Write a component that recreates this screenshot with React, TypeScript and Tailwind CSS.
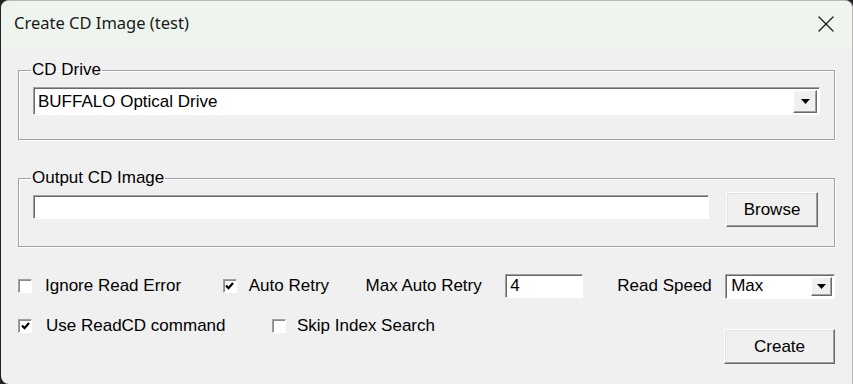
import { X } from "lucide-react"

const ui = "font-['Liberation_Sans',Arial,sans-serif] text-[17px] text-black"

function Check({ checked }: { checked?: boolean }) {
  return (
    <span className="w-[14px] h-[14px] bg-white border-t border-l border-t-[#a0a0a0] border-l-[#a0a0a0] border-b border-r border-b-white border-r-white shadow-[inset_1px_1px_0_#8a8a8a] flex items-center justify-center">
      {checked && (
        <svg width="9" height="8" viewBox="0 0 9 8">
          <path d="M1 3.5 L3.5 6.2 L8 1" stroke="#000" strokeWidth="2.2" fill="none" />
        </svg>
      )}
    </span>
  )
}

function Sunken({ className, children }: { className?: string; children?: React.ReactNode }) {
  return (
    <div className={`bg-white border border-t-[#a0a0a0] border-l-[#a0a0a0] border-b-white border-r-white shadow-[inset_1px_1px_0_#696969] flex items-center ${className ?? ""}`}>
      {children}
    </div>
  )
}

function DropArrow({ className }: { className?: string }) {
  return (
    <div className={`bg-[#f0f0f0] border border-t-white border-l-white border-b-[#696969] border-r-[#696969] shadow-[inset_-1px_-1px_0_#a0a0a0] flex items-center justify-center ${className ?? ""}`}>
      <svg width="9" height="5" viewBox="0 0 9 5">
        <path d="M0 0 H9 L4.5 5 Z" fill="#000" />
      </svg>
    </div>
  )
}

function Button({ label, className }: { label: string; className?: string }) {
  return (
    <div className={`bg-[#f0f0f0] border border-t-white border-l-white border-b-[#696969] border-r-[#696969] shadow-[inset_-1px_-1px_0_#a0a0a0,inset_1px_1px_0_#e3e3e3] flex items-center justify-center ${className ?? ""}`}>
      {label}
    </div>
  )
}

function Group({ title, className, children }: { title: string; className?: string; children: React.ReactNode }) {
  return (
    <fieldset className={`border border-[#a0a0a0] shadow-[1px_1px_0_white,inset_1px_1px_0_white] px-[14px] ${className ?? ""}`}>
      <legend className="ml-[-2px] px-[1px] leading-[16px]">{title}</legend>
      {children}
    </fieldset>
  )
}

export default function App() {
  return (
    <div className="w-[853px] h-[384px] bg-[#232323] overflow-hidden">
      <div className={`w-[852px] h-[384px] ml-[1px] bg-[#f0f0f0] rounded-t-[8px] rounded-bl-[8px] border-r border-t border-[#b9b9b9] overflow-hidden flex flex-col ${ui}`}>
        {/* title bar */}
        <div className="h-[46px] bg-[#edf5ee] flex items-center justify-between pl-[13px] pr-[12px] shrink-0">
          <span className="font-['Noto_Sans',sans-serif] text-[16.5px] text-[#1a1a1a] mt-[-2px]">Create CD Image (test)</span>
          <X size={28} strokeWidth={1.1} className="text-[#1a1a1a]" />
        </div>

        {/* body */}
        <div className="flex flex-col pl-[17px] pr-[17px] pt-[15px]">
          <Group title="CD Drive" className="h-[78px] pt-[9px]">
            <Sunken className="h-[28px] justify-between pl-[4px] pr-[2px]">
              <span className="pt-[2px]">BUFFALO Optical Drive</span>
              <DropArrow className="w-[24px] h-[23px]" />
            </Sunken>
          </Group>

          <Group title="Output CD Image" className="h-[77px] mt-[30px] pt-[9px]">
            <div className="flex items-start">
              <Sunken className="w-[676px] h-[24px]" />
              <Button label="Browse" className="w-[92px] h-[35px] ml-[17px] mt-[-3px]" />
            </div>
          </Group>

          <div className="flex items-center mt-[27px] h-[24px]">
            <div className="flex items-center w-[205px]">
              <Check />
              <span className="ml-[13px]">Ignore Read Error</span>
            </div>
            <div className="flex items-center w-[143px]">
              <Check checked />
              <span className="ml-[12px]">Auto Retry</span>
            </div>
            <span className="w-[140px]">Max Auto Retry</span>
            <Sunken className="w-[78px] h-[24px] pl-[4px]">4</Sunken>
            <span className="ml-[34px] w-[108px]">Read Speed</span>
            <Sunken className="w-[110px] h-[25px] justify-between pl-[5px] pr-[2px]">
              <span>Max</span>
              <DropArrow className="w-[21px] h-[19px]" />
            </Sunken>
          </div>

          <div className="flex items-start mt-[11px]">
            <div className="flex items-center w-[254px] mt-[4px]">
              <Check checked />
              <span className="ml-[14px]">Use ReadCD command</span>
            </div>
            <div className="flex items-center mt-[4px]">
              <Check />
              <span className="ml-[11px]">Skip Index Search</span>
            </div>
            <Button label="Create" className="w-[111px] h-[35px] ml-auto mt-[20px]" />
          </div>
        </div>
      </div>
    </div>
  )
}
